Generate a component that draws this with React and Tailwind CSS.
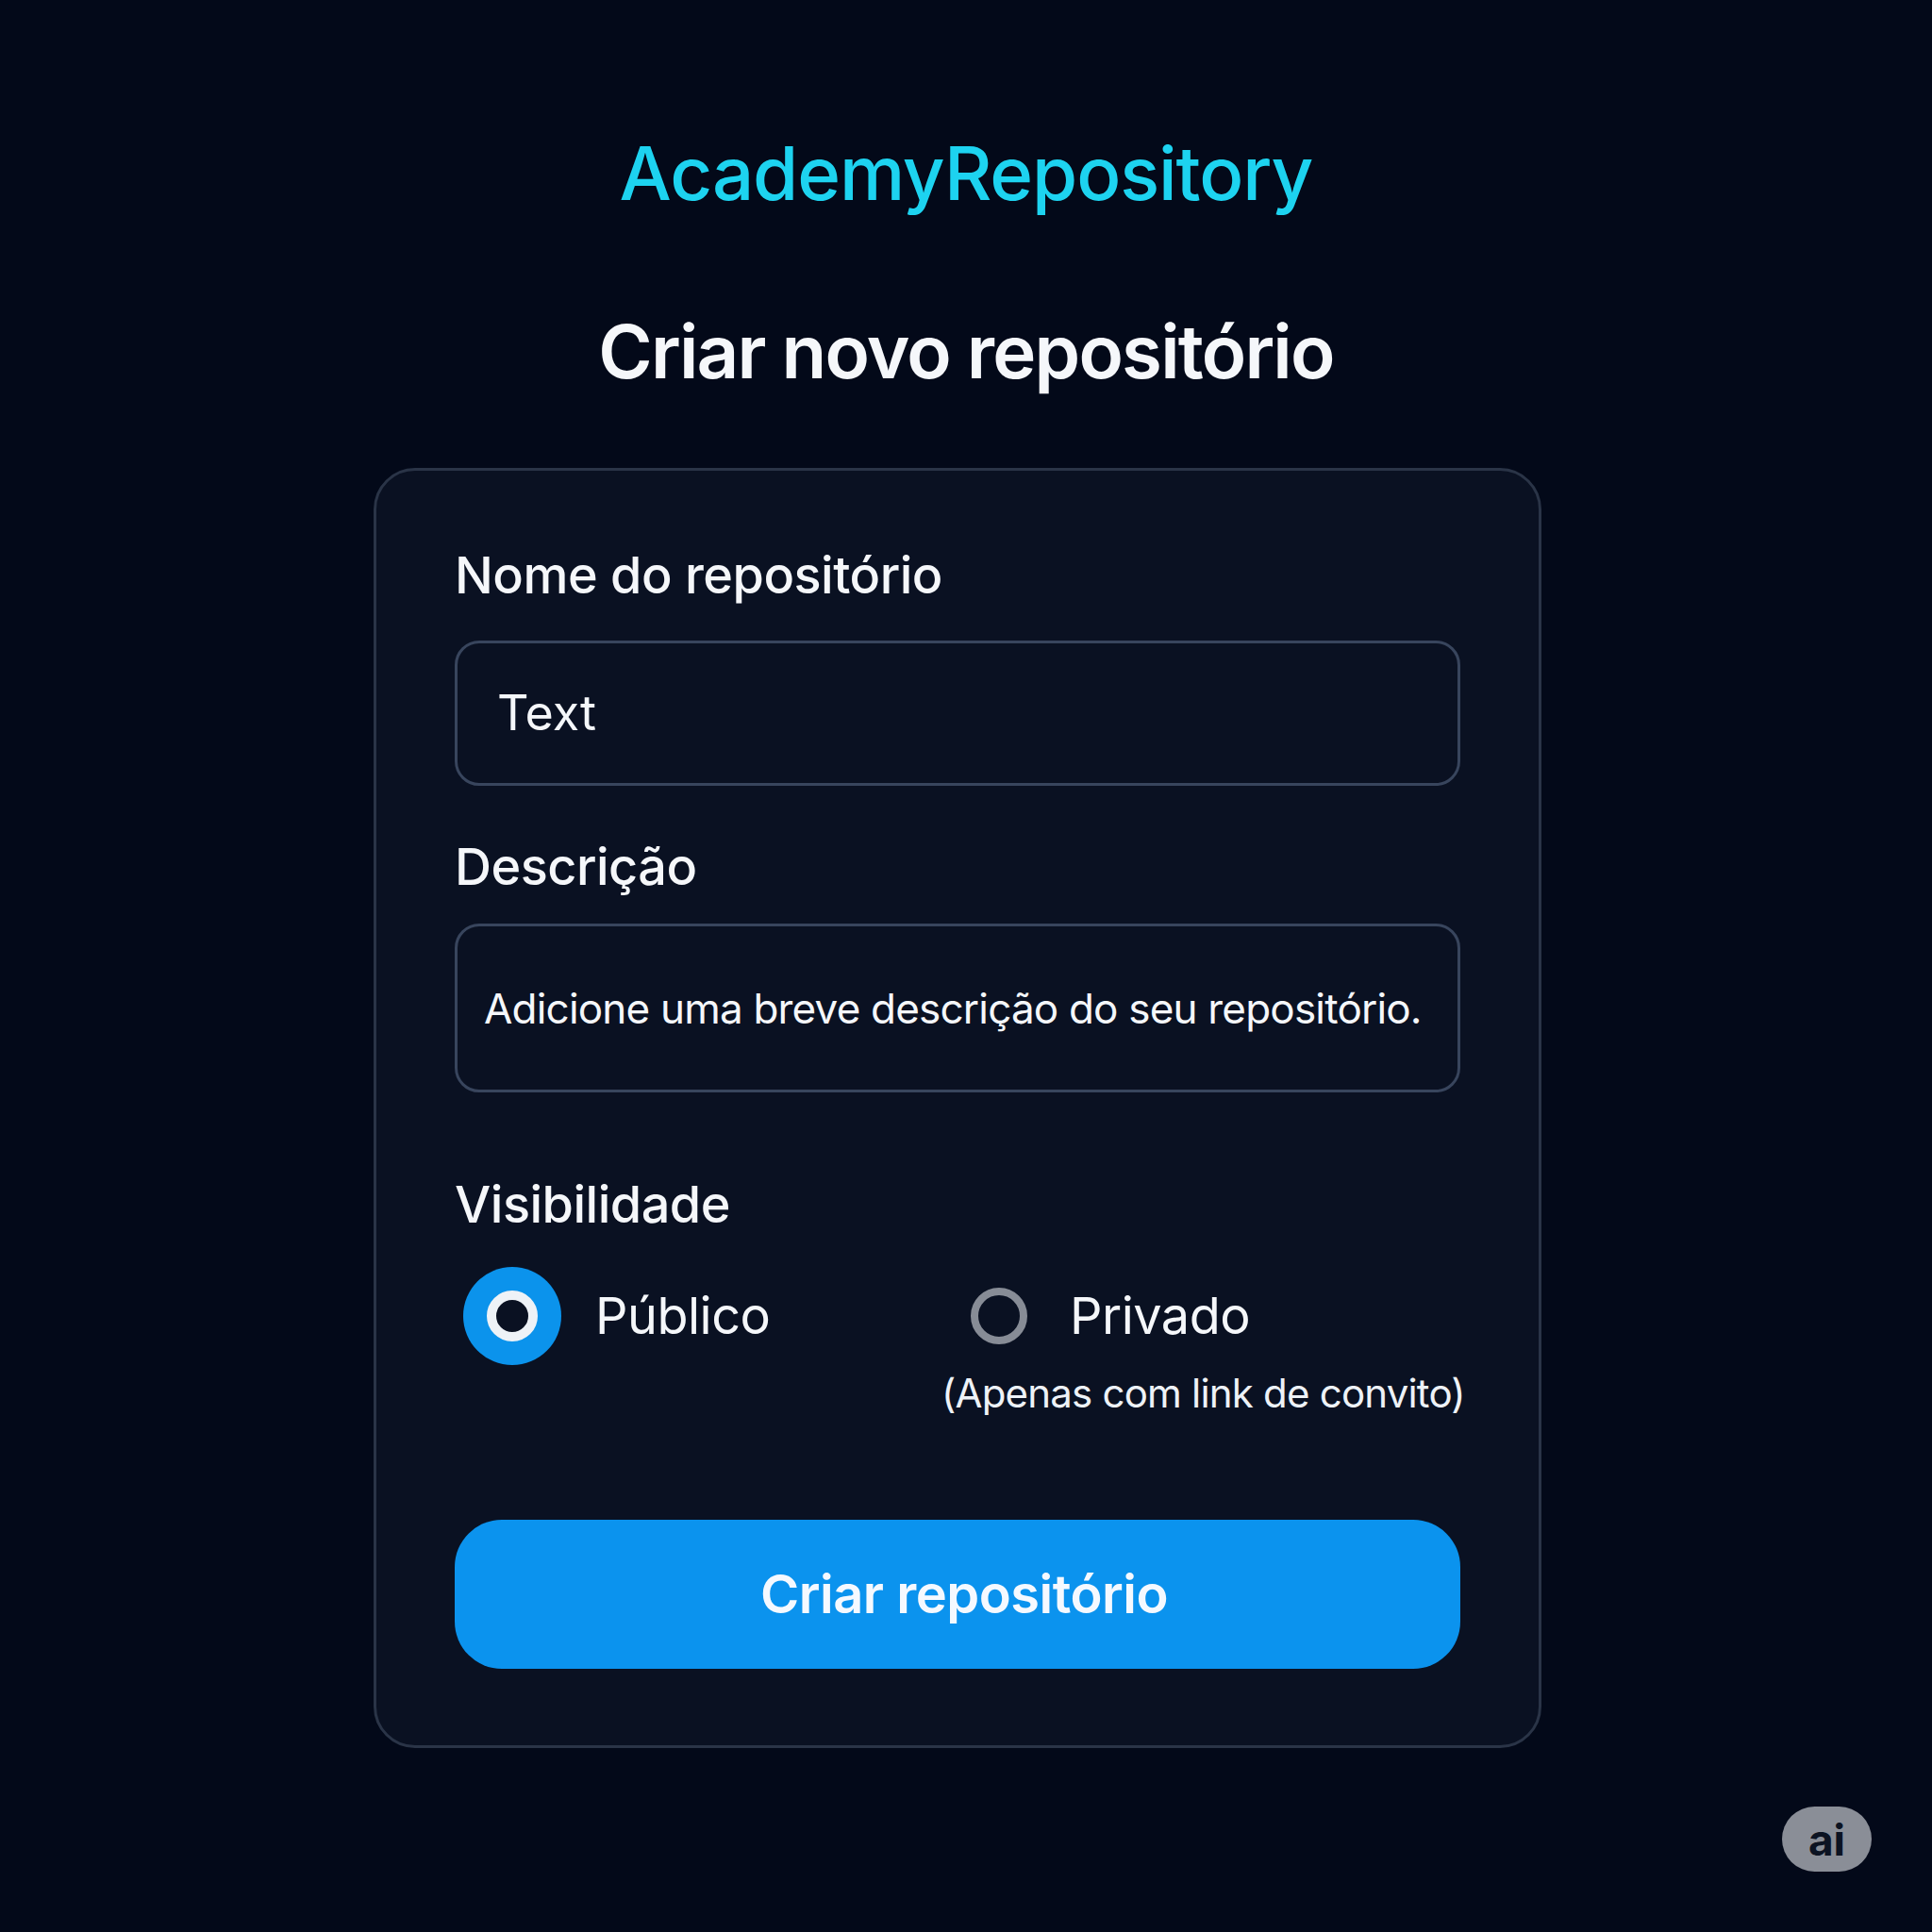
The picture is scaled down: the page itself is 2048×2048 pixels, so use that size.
export default function App() {
  return (
    <div
      className="relative w-[2048px] h-[2048px] bg-[#030919] flex flex-col items-center overflow-hidden"
      style={{ fontFamily: 'Inter, "Noto Sans", sans-serif' }}
    >
      <h1 className="mt-[145px] text-[78px] leading-none font-medium text-[#1dd3f0] tracking-[-1.1px]">
        AcademyRepository
      </h1>
      <h2 className="mt-[111px] text-[78px] leading-none font-semibold text-[#f5f7fa] tracking-[-1.8px]">
        Criar novo repositório
      </h2>

      <div className="mt-[84px] mr-[18px] w-[1238px] h-[1357px] rounded-[44px] border-[3px] border-[#2a3447] bg-[#0a1122] px-[83px] pt-[84px] flex flex-col">
        <label className="text-[54px] leading-none font-medium text-[#f5f7fa] tracking-[-0.5px]">
          Nome do repositório
        </label>
        <div className="mt-[42px] h-[154px] rounded-[26px] border-[3px] border-[#38455d] flex items-center pl-[42px]">
          <span className="text-[52px] leading-none font-normal text-[#f5f7fa]">Text</span>
        </div>

        <label className="mt-[59px] text-[54px] leading-none font-medium text-[#f5f7fa] tracking-[-0.5px]">
          Descrição
        </label>
        <div className="mt-[33px] h-[179px] rounded-[26px] border-[3px] border-[#38455d] flex items-center pl-[28px]">
          <span className="text-[44px] leading-none font-normal text-[#f5f7fa] tracking-[-0.8px] whitespace-nowrap">
            Adicione uma breve descrição do seu repositório.
          </span>
        </div>

        <label className="mt-[92px] text-[54px] leading-none font-medium text-[#f5f7fa] tracking-[-0.5px]">
          Visibilidade
        </label>

        <div className="mt-[39px] flex">
          <div className="w-[516px] shrink-0 pl-[9px] flex items-start">
            <div className="flex items-center gap-[36px]">
              <div className="w-[104px] h-[104px] rounded-full bg-[#0b93ec] flex items-center justify-center">
                <div className="w-[54px] h-[54px] rounded-full border-[10px] border-[#eef2f7] bg-[#0a1122]" />
              </div>
              <span className="text-[54px] leading-none text-[#f5f7fa] tracking-[-0.5px]">Público</span>
            </div>
          </div>
          <div className="flex flex-col">
            <div className="h-[104px] flex items-center pl-[31px] gap-[45px]">
              <div className="w-[60px] h-[60px] rounded-full border-[8px] border-[#878c96]" />
              <span className="text-[54px] leading-none text-[#f5f7fa] tracking-[-0.5px]">Privado</span>
            </div>
            <span className="mt-[9px] text-[42px] leading-none text-[#eef2f7] tracking-[-0.8px] whitespace-nowrap">
              (Apenas com link de convito)
            </span>
          </div>
        </div>

        <button className="mt-auto mb-[81px] h-[158px] rounded-[50px] bg-[#0b93ee] flex items-center justify-center pl-[14px]">
          <span className="text-[56px] leading-none font-semibold text-[#f5f9ff] tracking-[-0.5px]">
            Criar repositório
          </span>
        </button>
      </div>

      <div className="absolute left-[1889px] top-[1915px] w-[95px] h-[69px] rounded-full bg-[#8a8e97] flex items-center justify-center">
        <span className="text-[46px] leading-none font-bold text-[#0c1322]">ai</span>
      </div>
    </div>
  );
}
